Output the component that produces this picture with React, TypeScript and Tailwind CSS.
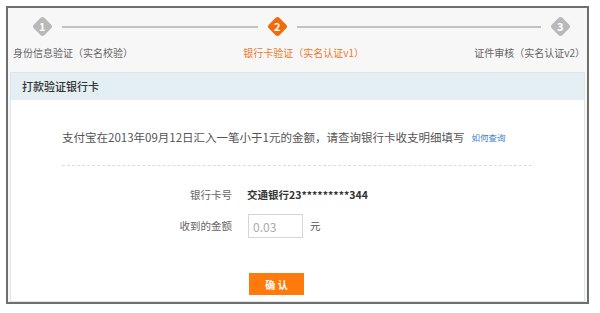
const font = { fontFamily: '"Noto Sans CJK SC", "Noto Sans", sans-serif' };

function Diamond({ n, active }: { n: number; active?: boolean }) {
  return (
    <div className="flex h-[21px] w-[21px] shrink-0 items-center justify-center">
      <div
        className={
          "flex h-[15px] w-[15px] rotate-45 items-center justify-center rounded-[3px] " +
          (active ? "bg-[#f26b0a]" : "bg-[#b9b9b9]")
        }
      >
        <span className="-rotate-45 text-[11px] font-bold leading-none text-white">{n}</span>
      </div>
    </div>
  );
}

export default function App() {
  return (
    <div className="h-[313px] w-[600px] bg-white pl-[6px] pt-[6px]" style={font}>
      <div className="flex h-[298px] w-[583px] flex-col border-2 border-[#6e6e6e] bg-[#f7f7f7]">
        {/* steps */}
        <div className="h-[64px] shrink-0">
          <div className="mt-[8px] flex h-[21px] items-center pl-[24px] pr-[16px]">
            <Diamond n={1} />
            <div className="mx-[9px] h-[2px] w-[196px] bg-[#c2c2c2]" />
            <Diamond n={2} active />
            <div className="mx-[9px] h-[2px] flex-1 bg-[#c2c2c2]" />
            <Diamond n={3} />
          </div>
          <div className="mt-[9px] flex justify-between pl-[5px] pr-[2px] text-[10px] leading-[14px] text-[#666]">
            <span>身份信息验证（实名校验）</span>
            <span className="text-[#ec7a2c]">银行卡验证（实名认证v1）</span>
            <span>证件审核（实名认证v2）</span>
          </div>
        </div>

        {/* panel */}
        <div className="mx-[2px] flex flex-1 flex-col border border-[#dfe5e8] bg-white">
          <div className="flex h-[27px] items-center bg-[#e4eff4] pl-[11px] text-[11px] font-medium text-[#333]">
            打款验证银行卡
          </div>
          <div className="pl-[51px]">
            <div className="mt-[29px] flex items-center text-[11.5px] leading-[16px] text-[#555]">
              <span>支付宝在2013年09月12日汇入一笔小于1元的金额，请查询银行卡收支明细填写</span>
              <a className="ml-[7px] text-[8.5px] text-[#3b82c8]">如何查询</a>
            </div>
            <div className="mt-[20px] w-[470px] border-t border-dashed border-[#dcdcdc]" />
            <div className="mt-[17px] flex h-[24px] items-center text-[10.5px]">
              <span className="w-[170px] text-right text-[#666]">银行卡号</span>
              <span className="ml-[15px] font-bold text-[#333]">交通银行23*********344</span>
            </div>
            <div className="mt-[7px] flex h-[24px] items-center text-[10.5px]">
              <span className="w-[170px] text-right text-[#666]">收到的金额</span>
              <input
                className="ml-[16px] h-[24px] w-[55px] border border-[#d6d6d6] px-[4px] text-[12px] text-[#333] outline-none placeholder:text-[#aaa]"
                placeholder="0.03"
                style={font}
              />
              <span className="ml-[7px] text-[#555]">元</span>
            </div>
            <button
              className="ml-[187px] mt-[35px] flex h-[22px] w-[55px] items-center justify-center bg-[#ff7a0d] text-[10px] font-bold text-white"
              style={font}
            >
              确 认
            </button>
          </div>
        </div>
      </div>
    </div>
  );
}
